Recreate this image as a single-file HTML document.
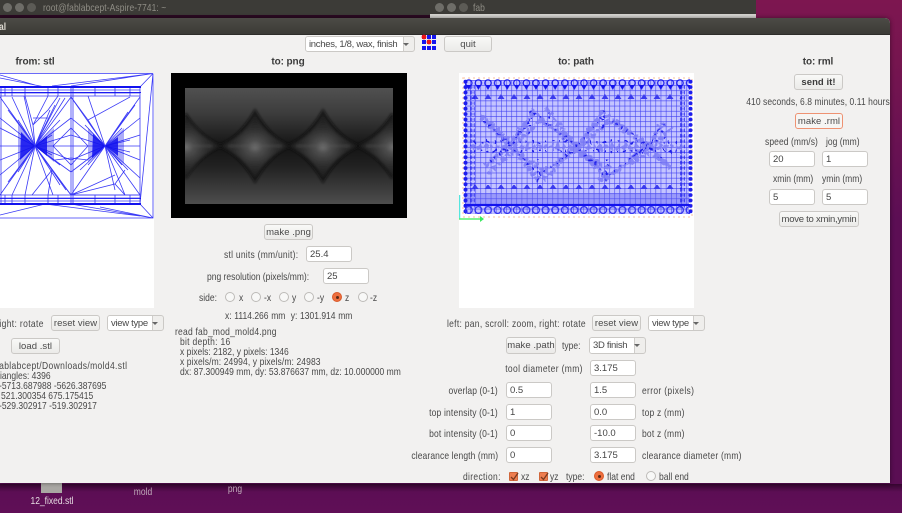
<!DOCTYPE html>
<html><head><meta charset="utf-8"><style>
html,body{margin:0;padding:0;width:902px;height:513px;overflow:hidden;background:#5e0e55}
body{position:relative;font-family:"Liberation Sans",sans-serif;font-size:10.5px;color:#484848}
#w{position:absolute;left:0;top:0;width:902px;height:513px;overflow:hidden;filter:blur(.3px)}
.a,.t,.r,.c,.b,.i,.d,.h{position:absolute;box-sizing:border-box;white-space:nowrap}
.t,.r,.c,.h{line-height:12px;height:12px}
.t{transform-origin:0 0;transform:translateY(1px) scaleX(.81)}
.r{text-align:right;transform-origin:100% 0;transform:translateY(1px) scaleX(.81)}
.c{text-align:center;transform:translateY(1px) scaleX(.81)}
.h{font-weight:bold;font-size:10px;text-align:center;color:#3c3c3c;letter-spacing:-.1px;transform:translateY(.5px)}
.b{height:16px;line-height:15px;text-align:center;border:1px solid #cbc9c6;border-radius:3px;background:linear-gradient(#f8f8f7,#ebeae8);color:#4a4a4a;font-size:9.5px;letter-spacing:.05px}
.i{width:46px;height:16px;line-height:15px;padding-left:3px;background:#fff;border:1px solid #cbc9c6;border-radius:3px;color:#444;font-size:9.5px}
.d{height:16px;border:1px solid #cbc9c6;border-radius:3px;background:#efeeec;line-height:15px;font-size:9.5px;letter-spacing:-.3px}
.d span{display:block;position:absolute;left:0;top:0;bottom:0;overflow:hidden;background:#fff;padding-left:3px;border-right:1px solid #cfcdca;border-radius:2px 0 0 2px}
.d i{position:absolute;right:5px;top:6px;width:0;height:0;border:3px solid transparent;border-top:3px solid #666;border-bottom:0}
.ra{position:absolute;width:10px;height:10px;box-sizing:border-box;border:1px solid #bdbbb8;border-radius:50%;background:#f8f8f7}
.on{background:#ee6f3e;border-color:#d95a2b}
.on:after{content:"";position:absolute;left:2.5px;top:2.5px;width:3px;height:3px;border-radius:50%;background:#5a2a18}
.ck{position:absolute;width:9px;height:9px;background:#ee7d4f;border:1px solid #d0663a;border-radius:1px;box-sizing:border-box}
.ck svg{position:absolute;left:0;top:-1px}
</style></head><body><div id="w">
<div class="a" style="left:0;top:0;width:902px;height:513px;background:linear-gradient(#7d1650 0,#76154f 60px,#5c0e54 220px,#5a0e53 480px,#600f57 513px)"></div>
<div class="a" style="left:0;top:484px;width:902px;height:8px;background:linear-gradient(#35062f,#5a0e5400)"></div>
<div class="a" style="left:0;top:0;width:430px;height:18px;background:#3c3b37"></div>
<div class="a" style="left:0;top:15px;width:430px;height:3px;background:#2c0a22"></div>
<div class="a" style="left:430px;top:0;width:326px;height:14px;background:#3c3b37"></div>
<div class="a" style="left:430px;top:14px;width:326px;height:4px;background:#d9d7d3"></div>
<div class="t" style="left:43px;top:1px;color:#8f8d85;letter-spacing:.1px">root@fablabcept-Aspire-7741: ~</div>
<div class="t" style="left:473px;top:1px;color:#8f8d85">fab</div>
<div class="a" style="left:3px;top:3px;width:9px;height:9px;border-radius:50%;background:#6e6d68"></div>
<div class="a" style="left:15px;top:3px;width:9px;height:9px;border-radius:50%;background:#6e6d68"></div>
<div class="a" style="left:27px;top:3px;width:9px;height:9px;border-radius:50%;background:#5c5b56"></div>
<div class="a" style="left:435px;top:3px;width:9px;height:9px;border-radius:50%;background:#6e6d68"></div>
<div class="a" style="left:447px;top:3px;width:9px;height:9px;border-radius:50%;background:#6e6d68"></div>
<div class="a" style="left:459px;top:3px;width:9px;height:9px;border-radius:50%;background:#5c5b56"></div>

<div class="a" style="left:41px;top:481px;width:21px;height:12px;background:#a9a7a3"></div>
<div class="c" style="left:12px;top:494px;width:80px;color:#e6dce2">12_fixed.stl</div>
<div class="c" style="left:113px;top:485px;width:60px;color:#bfa9b9">mold</div>
<div class="c" style="left:205px;top:482px;width:60px;color:#bfa9b9">png</div>

<!-- main window -->
<div class="a" style="left:0;top:18px;width:890px;height:465px;background:#f2f1f0;border-radius:0 5px 0 0;box-shadow:0 0 5px #0007"></div>
<div class="a" style="left:0;top:18px;width:890px;height:17px;background:linear-gradient(#4b4a45,#3b3a36);border-radius:0 5px 0 0;border-bottom:1px solid #2e2d2a"></div>
<div class="t" style="left:-1px;top:20px;color:#dfdbd2;font-weight:bold">al</div>

<div class="d" style="left:305px;top:36px;width:110px"><span style="width:94px">inches, 1/8, wax, finish</span><i></i></div>
<svg class="a" style="left:420px;top:34px" width="18" height="18"><g fill="#1414f0"><rect x="2" y="1" width="4" height="4"/><rect x="7" y="1" width="4" height="4"/><rect x="12" y="1" width="4" height="4"/><rect x="2" y="6" width="4" height="4"/><rect x="7" y="6" width="4" height="4"/><rect x="12" y="6" width="4" height="4"/><rect x="2" y="12" width="4" height="4"/><rect x="7" y="12" width="4" height="4"/><rect x="12" y="12" width="4" height="4"/></g><circle cx="4" cy="3" r="2.4" fill="#f01414"/><circle cx="9" cy="8" r="2.4" fill="#f01414"/></svg>
<div class="b" style="left:444px;top:36px;width:48px">quit</div>

<div class="h" style="left:0;top:56px;width:70px">from: stl</div>
<div class="h" style="left:248px;top:56px;width:80px">to: png</div>
<div class="h" style="left:536px;top:56px;width:80px">to: path</div>
<div class="h" style="left:778px;top:56px;width:80px">to: rml</div>

<!-- STL canvas -->
<svg class="a" style="left:0;top:73px;background:#fff" width="154" height="235" viewBox="0 73 154 235">
<g fill="none" stroke="#3a3af6" stroke-width=".8">
<path d="M0 73.5H153M0 218H153L153 73.5M0 87H140V204H0M153 73.5L140 87M153 218L140 204M153 73.5L140 204M153 218L71 204M153 73.5L52 86M153 73.5L71 86M0 75L35 85M0 215L45 204M45 204L140 216M45 87L0 78M153 218L100 207"/>
<path d="M71 87V204M73 87V204M0 90H140M0 93H140M0 96H140M0 195H140M0 198H140M0 201H140M5 87V96M12 87V96M25 87V96M48 87V96M58 87V96M95 87V96M115 87V96M130 87V96M5 195V204M12 195V204M25 195V204M48 195V204M58 195V204M95 195V204M115 195V204M130 195V204M1 87V204"/>
<path d="M35 146L71 97M35 146L71 195M35 146L0 97M35 146L0 195M35 146L24 96M35 146L53 195M35 146L25 195M35 146L60 98M35 146L65 98M35 146L71 118M35 146L71 135M35 146L71 146M35 146L71 160M35 146L71 172M35 146L0 118M35 146L0 128M35 146L0 146M35 146L0 160M35 146L0 175M35 146L12 97M35 146L12 195M35 146L52 170M35 146L55 105M35 146L50 110M35 146L66 190M35 146L60 185M35 146L8 110M35 146L8 182M35 146L18 120M35 146L18 172M35 146L60 120M35 146L60 165M35 146L52 135M35 146L52 155"/>
<path d="M105 146L71 97M105 146L71 195M105 146L140 97M105 146L140 195M105 146L88 120M105 146L88 96M105 146L71 118M105 146L71 135M105 146L71 146M105 146L71 160M105 146L71 172M105 146L140 118M105 146L140 135M105 146L140 146M105 146L140 160M105 146L140 178M105 146L115 190M105 146L125 195M105 146L128 170M105 146L135 105M105 146L128 112M105 146L135 188M105 146L122 128M105 146L122 165M105 146L85 125M105 146L80 170M105 146L88 165M105 146L130 140M105 146L130 152"/>
<path d="M25 96L33 125L48 96M33 125L35 146M33 125L48 110L58 96M33 118L48 118M71 97L88 120L130 97M71 195L115 184L125 195M71 195L140 195M71 195L115 175M115 184L125 170M52 170L48 195M52 170L32 195M52 170L71 195M55 160L71 158L88 160M53 146L71 165L88 146M53 146L71 128L88 146"/>
</g>
<g fill="#1212ee"><path d="M35 146L21 132L20 160ZM35 146L47 136L47 156ZM105 146L93 134L92 158ZM105 146L118 137L118 156Z" opacity=".85"/><path d="M35 146L18 124L18 168ZM35 146L54 128L54 162ZM105 146L88 128L88 162ZM105 146L124 128L124 164Z" opacity=".35"/><rect x="0" y="86" width="141" height="2"/><rect x="0" y="203" width="141" height="2"/><rect x="0" y="92" width="141" height=".9"/><rect x="0" y="198" width="141" height=".9"/></g>
</svg>

<!-- PNG canvas -->
<svg class="a" style="left:171px;top:73px" width="236" height="145" viewBox="171 73 236 145">
<defs>
<linearGradient id="bg" x1="0" y1="0" x2="0" y2="1"><stop offset="0" stop-color="#505050"/><stop offset=".22" stop-color="#3c3c3c"/><stop offset=".5" stop-color="#141414"/><stop offset=".68" stop-color="#222"/><stop offset=".9" stop-color="#404040"/><stop offset="1" stop-color="#4e4e4e"/></linearGradient>
<radialGradient id="st"><stop offset="0" stop-color="#707070"/><stop offset=".2" stop-color="#4e4e4e"/><stop offset=".55" stop-color="#303030"/><stop offset="1" stop-color="#1a1a1a"/></radialGradient>
<filter id="bl"><feGaussianBlur stdDeviation="1.2"/></filter>
<filter id="jit" x="-5%" y="-5%" width="110%" height="110%"><feTurbulence type="fractalNoise" baseFrequency=".2" numOctaves="1" seed="4"/><feDisplacementMap in="SourceGraphic" scale="9" xChannelSelector="R" yChannelSelector="G"/></filter>
<clipPath id="cp"><rect x="185" y="88" width="208" height="116"/></clipPath>
</defs>
<rect x="171" y="73" width="236" height="145" fill="#000"/>
<rect x="185" y="88" width="208" height="116" fill="url(#bg)"/>
<g clip-path="url(#cp)"><g filter="url(#bl)">
<path d="M185 114Q200 138 220 146Q240 138 255 112Q270 138 288 146Q308 138 323 112Q338 138 358 146Q378 138 393 114M185 178Q200 154 220 146Q240 154 255 180Q270 154 288 146Q308 154 323 180Q338 154 358 146Q378 154 393 178" fill="none" stroke="#121212" stroke-width="3.5" opacity=".8"/>
<path d="M255 116Q266 136 290 146Q266 156 255 178Q244 156 220 146Q244 136 255 116Z" fill="url(#st)"/>
<path d="M323 116Q334 136 358 146Q334 156 323 178Q312 156 288 146Q312 136 323 116Z" fill="url(#st)"/>
<path d="M186 116Q197 136 221 146Q197 156 186 178Q175 156 151 146Q175 136 186 116Z" fill="url(#st)"/>
<path d="M393 116Q404 136 428 146Q404 156 393 178Q382 156 358 146Q382 136 393 116Z" fill="url(#st)"/>
<path d="M190 146H212M228 146H282M296 146H350M366 146H390" stroke="#5c5c5c" stroke-width="1.3" opacity=".6"/>
</g></g>
</svg>

<!-- path canvas -->
<svg class="a" style="left:459px;top:73px;background:#fff" width="235" height="235" viewBox="459 73 235 235">
<defs>
<pattern id="g" x="465" y="80" width="5.15" height="5.15" patternUnits="userSpaceOnUse"><path d="M0 0V5.15M0 0H5.15" stroke="#3c3cf0" stroke-width="1.1" fill="none"/></pattern>
<pattern id="rt" x="464" y="79" width="9.6" height="12" patternUnits="userSpaceOnUse"><circle cx="4.8" cy="4" r="3.2" fill="none" stroke="#1818ee" stroke-width="1.2"/><path d="M2 6L7.6 6L4.8 11Z" fill="#1414ee"/></pattern>
<pattern id="rb" x="464" y="203" width="9.6" height="12" patternUnits="userSpaceOnUse"><circle cx="4.8" cy="7" r="3.4" fill="none" stroke="#3030f0" stroke-width="1.3"/><path d="M0 2H9.6" stroke="#1414ee" stroke-width="2"/></pattern>
<pattern id="rs" x="463" y="79" width="5" height="5.4" patternUnits="userSpaceOnUse"><circle cx="2.5" cy="2.7" r="2" fill="#1c1cee"/></pattern>
<pattern id="cl" x="470" y="94" width="13" height="10" patternUnits="userSpaceOnUse"><path d="M5 0L8.5 5H1.5Z" fill="#3a3aee"/></pattern>
</defs>
<rect x="463" y="78" width="229" height="139" fill="none" stroke="#fbd6be" stroke-width="1.5" stroke-dasharray="2 3"/>
<rect x="465" y="80" width="224" height="134" fill="#c4c4ff"/>
<rect x="465" y="80" width="224" height="134" fill="url(#g)"/>
<rect x="470" y="94" width="212" height="5" fill="url(#cl)"/>
<rect x="470" y="185" width="212" height="5" fill="url(#cl)"/>
<rect x="464" y="193" width="226" height="10" fill="#5c5cf2" opacity=".4"/>
<rect x="463" y="79" width="5" height="135" fill="url(#rs)"/>
<rect x="470" y="84" width="5" height="125" fill="url(#rs)" opacity=".6"/>
<rect x="688" y="79" width="5" height="135" fill="url(#rs)"/>
<rect x="680" y="84" width="5" height="125" fill="url(#rs)" opacity=".7"/>
<rect x="464" y="79" width="226" height="12" fill="url(#rt)"/>
<rect x="464" y="203" width="226" height="11" fill="url(#rb)"/>
<g fill="none" stroke-linecap="round" stroke-linejoin="round" filter="url(#jit)">
<g stroke="#7a7af4" stroke-width="5" stroke-dasharray="0 6" opacity=".8">
<path d="M482 118L510 146L533 112M510 146L482 168M510 146L537 178M533 112L577 147L603 112M537 178L577 147L607 178M603 112L647 146L665 120M607 178L647 146L668 165M547 110L577 147M474 147H682"/>
<path d="M490 122L514 146L540 120M490 172L514 150L545 172M540 120L581 147L610 120M545 178L573 150L612 170M610 122L652 146L670 130M600 180L652 150L672 170"/>
</g>
<g stroke="#2020ea" stroke-width="2.2" stroke-dasharray="0 6.5">
<path d="M485 121L510 146L535 114M510 146L486 165M510 146L537 172M535 114L577 147L603 116M540 175L577 147L607 175M606 116L647 146L662 125M610 175L647 146L665 160M475 142H680M475 151H680M530 113L530 135M548 112L548 130M537 160V180M607 160V180M603 112V130M664 125V140"/>
</g>
</g>
<path d="M459.5 219V195" stroke="#55e6e0" stroke-width="1.5"/><path d="M459 219H482" stroke="#55f070" stroke-width="1.5"/><path d="M480 216L484 219L480 222Z" fill="#3ce860"/>
</svg>

<!-- rml col -->
<div class="b" style="left:794px;top:74px;width:49px;font-weight:bold;color:#3c3c3c">send it!</div>
<div class="c" style="left:698px;top:95px;width:240px;letter-spacing:.08px">410 seconds, 6.8 minutes, 0.11 hours</div>
<div class="b" style="left:795px;top:113px;width:48px;border-color:#ee9272;background:#f6f5f3">make .rml</div>
<div class="t" style="left:765px;top:135px;letter-spacing:.1px">speed (mm/s)</div>
<div class="t" style="left:826px;top:135px">jog (mm)</div>
<div class="i" style="left:769px;top:151px">20</div>
<div class="i" style="left:822px;top:151px">1</div>
<div class="t" style="left:773px;top:172px">xmin (mm)</div>
<div class="t" style="left:822px;top:172px">ymin (mm)</div>
<div class="i" style="left:769px;top:189px">5</div>
<div class="i" style="left:822px;top:189px">5</div>
<div class="b" style="left:779px;top:211px;width:80px;letter-spacing:-.25px">move to xmin,ymin</div>

<!-- png col -->
<div class="b" style="left:264px;top:224px;width:49px">make .png</div>
<div class="t" style="left:224px;top:248px;letter-spacing:.3px">stl units (mm/unit):</div>
<div class="i" style="left:306px;top:246px">25.4</div>
<div class="t" style="left:207px;top:270px">png resolution (pixels/mm):</div>
<div class="i" style="left:323px;top:268px">25</div>
<div class="t" style="left:199px;top:291px">side:</div>
<div class="ra" style="left:225px;top:292px"></div><div class="t" style="left:239px;top:291px">x</div>
<div class="ra" style="left:251px;top:292px"></div><div class="t" style="left:264px;top:291px">-x</div>
<div class="ra" style="left:279px;top:292px"></div><div class="t" style="left:292px;top:291px">y</div>
<div class="ra" style="left:304px;top:292px"></div><div class="t" style="left:317px;top:291px">-y</div>
<div class="ra on" style="left:332px;top:292px"></div><div class="t" style="left:345px;top:291px">z</div>
<div class="ra" style="left:358px;top:292px"></div><div class="t" style="left:370px;top:291px">-z</div>
<div class="t" style="left:225px;top:309px;word-spacing:.4px">x: 1114.266 mm&nbsp; y: 1301.914 mm</div>
<div class="t" style="left:175px;top:325px;letter-spacing:.27px">read fab_mod_mold4.png</div>
<div class="t" style="left:180px;top:335px;letter-spacing:.35px">bit depth: 16</div>
<div class="t" style="left:180px;top:345px">x pixels: 2182, y pixels: 1346</div>
<div class="t" style="left:180px;top:355px;letter-spacing:.12px">x pixels/m: 24994, y pixels/m: 24983</div>
<div class="t" style="left:180px;top:365px">dx: 87.300949 mm, dy: 53.876637 mm, dz: 10.000000 mm</div>

<!-- stl col -->
<div class="r" style="right:858px;top:317px;letter-spacing:.43px">ight: rotate</div>
<div class="b" style="left:51px;top:315px;width:49px">reset view</div>
<div class="d" style="left:107px;top:315px;width:57px"><span style="width:41px">view type</span><i></i></div>
<div class="b" style="left:11px;top:338px;width:49px">load .stl</div>
<div class="r" style="right:775px;top:359px;letter-spacing:.45px">ablabcept/Downloads/mold4.stl</div>
<div class="t" style="left:0;top:369px">iangles: 4396</div>
<div class="t" style="left:-1px;top:379px">-5713.687988 -5626.387695</div>
<div class="t" style="left:1px;top:389px">521.300354 675.175415</div>
<div class="t" style="left:-1px;top:399px">-529.302917 -519.302917</div>

<!-- path col -->
<div class="t" style="left:447px;top:317px;letter-spacing:.35px">left: pan, scroll: zoom, right: rotate</div>
<div class="b" style="left:592px;top:315px;width:49px">reset view</div>
<div class="d" style="left:648px;top:315px;width:57px"><span style="width:41px">view type</span><i></i></div>
<div class="b" style="left:506px;top:337px;width:50px;height:17px">make .path</div>
<div class="t" style="left:562px;top:339px">type:</div>
<div class="d" style="left:589px;top:337px;width:57px;height:17px"><span style="width:41px">3D finish</span><i></i></div>
<div class="r" style="right:319px;top:362px;letter-spacing:.43px">tool diameter (mm)</div>
<div class="i" style="left:590px;top:360px">3.175</div>
<div class="r" style="right:404px;top:384px;letter-spacing:.1px">overlap (0-1)</div>
<div class="i" style="left:506px;top:382px">0.5</div>
<div class="i" style="left:590px;top:382px">1.5</div>
<div class="t" style="left:642px;top:384px;letter-spacing:.4px">error (pixels)</div>
<div class="r" style="right:404px;top:406px;letter-spacing:.2px">top intensity (0-1)</div>
<div class="i" style="left:506px;top:404px">1</div>
<div class="i" style="left:590px;top:404px">0.0</div>
<div class="t" style="left:642px;top:406px;letter-spacing:.25px">top z (mm)</div>
<div class="r" style="right:404px;top:427px;letter-spacing:.2px">bot intensity (0-1)</div>
<div class="i" style="left:506px;top:425px">0</div>
<div class="i" style="left:590px;top:425px">-10.0</div>
<div class="t" style="left:642px;top:427px;letter-spacing:.25px">bot z (mm)</div>
<div class="r" style="right:404px;top:449px;letter-spacing:.13px">clearance length (mm)</div>
<div class="i" style="left:506px;top:447px">0</div>
<div class="i" style="left:590px;top:447px">3.175</div>
<div class="t" style="left:642px;top:449px;letter-spacing:.28px">clearance diameter (mm)</div>
<div class="t" style="left:463px;top:470px;letter-spacing:.4px">direction:</div>
<div class="ck" style="left:509px;top:472px"><svg width="9" height="9"><path d="M1 5L3.5 7.5L8 1" stroke="#7a3a20" stroke-width="1.3" fill="none"/></svg></div>
<div class="t" style="left:521px;top:470px">xz</div>
<div class="ck" style="left:539px;top:472px"><svg width="9" height="9"><path d="M1 5L3.5 7.5L8 1" stroke="#7a3a20" stroke-width="1.3" fill="none"/></svg></div>
<div class="t" style="left:550px;top:470px">yz</div>
<div class="t" style="left:566px;top:470px">type:</div>
<div class="ra on" style="left:594px;top:471px"></div>
<div class="t" style="left:607px;top:470px">flat end</div>
<div class="ra" style="left:646px;top:471px"></div>
<div class="t" style="left:659px;top:470px">ball end</div>
</div></body></html>
